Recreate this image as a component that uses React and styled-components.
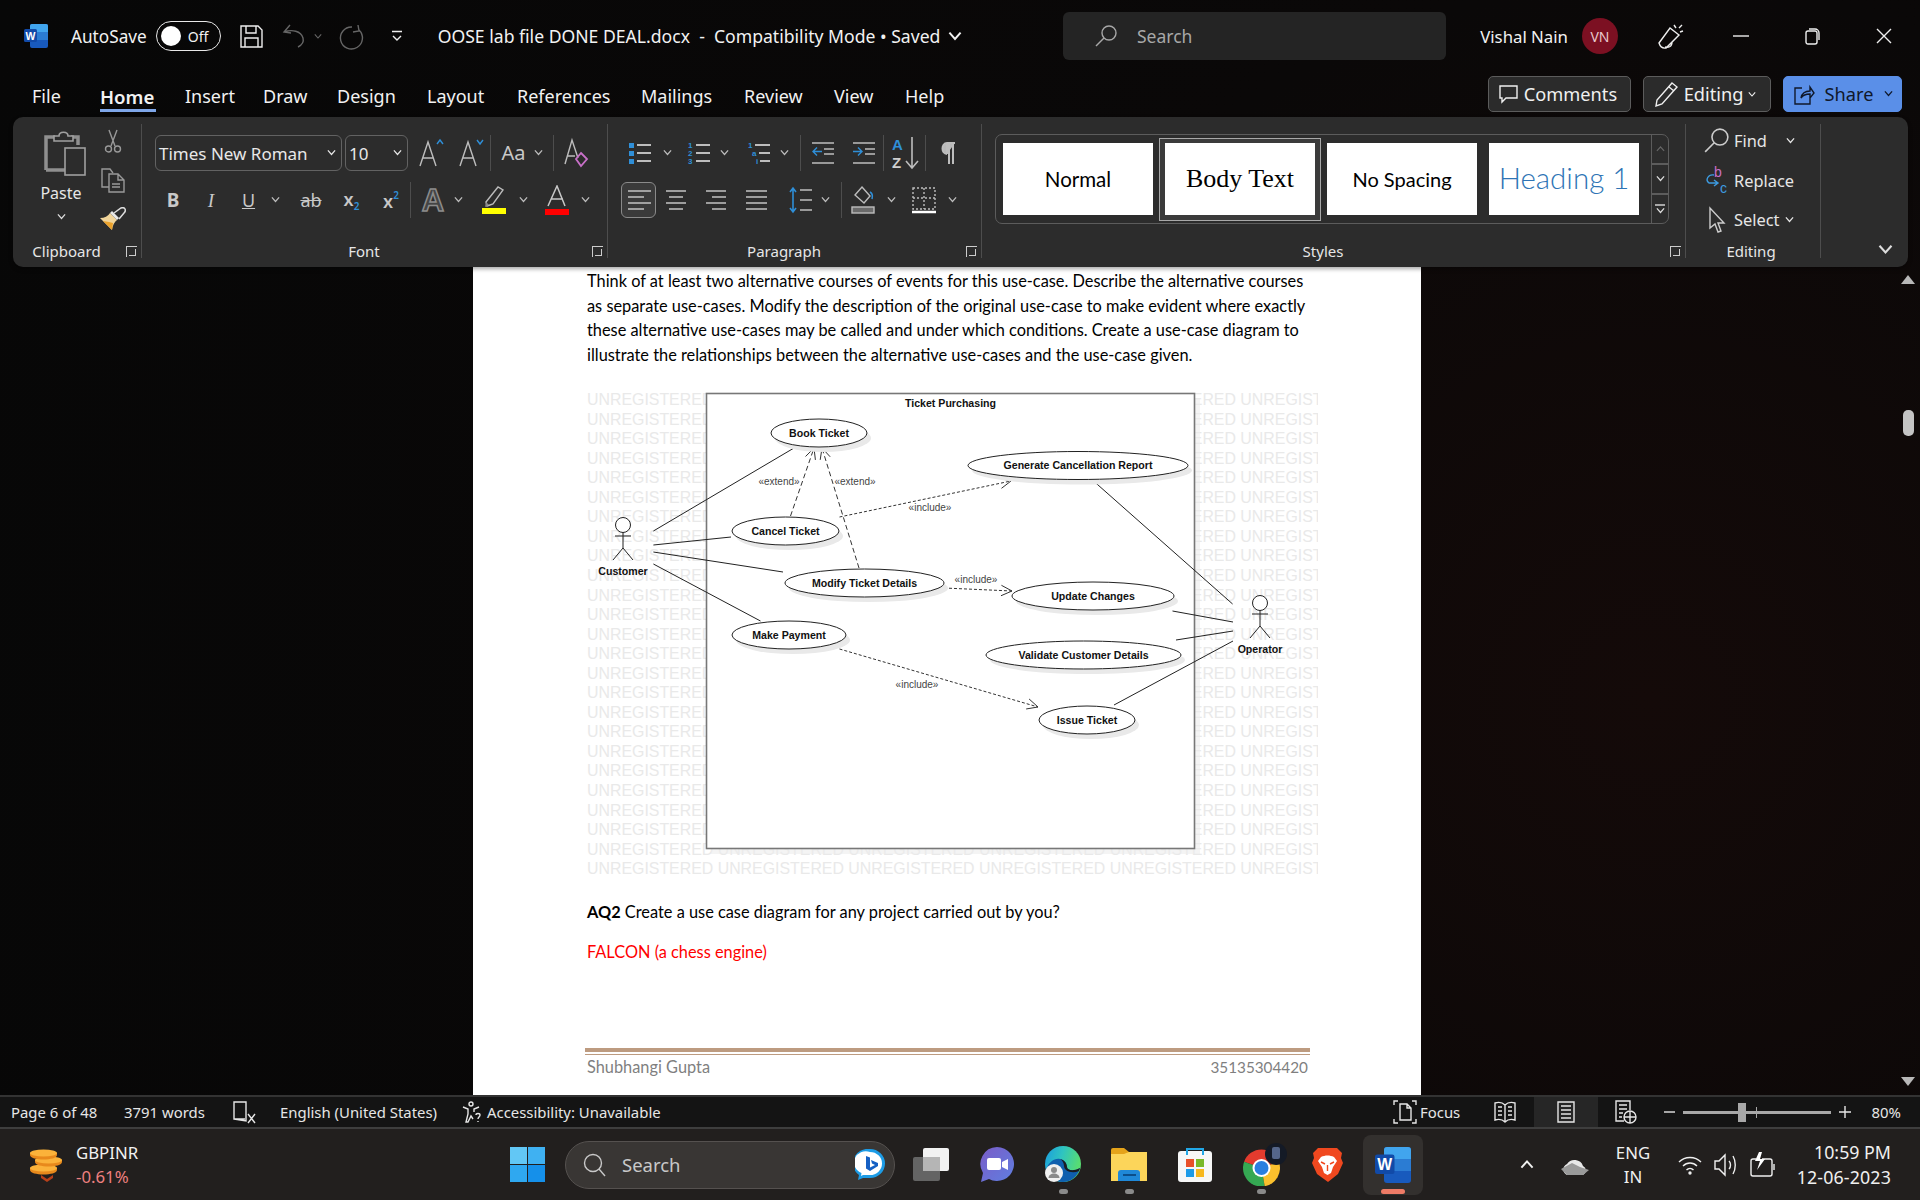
import React from 'react';
import styled, { createGlobalStyle } from 'styled-components';

const UI = `"Noto Sans", "Open Sans", sans-serif`;

const Global = createGlobalStyle`
  html, body { margin: 0; padding: 0; background: #080808; }
  * { box-sizing: border-box; }
  svg { display: block; flex: none; }
`;

const Shell = styled.div`
  width: 1920px;
  height: 1200px;
  overflow: hidden;
  display: flex;
  flex-direction: column;
  font-family: ${UI};
  color: #f2f2f2;
  background: radial-gradient(circle at 1650px 700px, #140a09 0, #0a0808 40%, #070707 100%);
`;

const Ic = styled.svg`
  fill: none;
  stroke: currentColor;
  stroke-width: 1.4;
  overflow: visible;
`;

const Chev = ({ w = 9, up }) => (
  <Ic width={w} height={w * 0.6} viewBox="0 0 10 6" strokeWidth="1.4">
    <path d={up ? 'M1 5.5 5 1l4 4.5' : 'M1 .5 5 5l4-4.5'} />
  </Ic>
);

/* title bar */
const TitleBar = styled.div`
  height: 62px;
  flex: none;
  display: flex;
  align-items: center;
  padding: 10px 0 0 24px;
`;
const TitleLeft = styled.div`
  width: 1039px;
  flex: none;
  display: flex;
  align-items: center;
`;
const AutoSave = styled.span`
  font-size: 17.2px;
  margin-left: 23px;
`;
const Toggle = styled.div`
  width: 65px;
  height: 30px;
  margin: 0 19px 0 9px;
  border: 1.5px solid #e8e8e8;
  border-radius: 15px;
  display: flex;
  align-items: center;
  padding-left: 4px;
  gap: 7px;
  font-size: 14px;
`;
const Knob = styled.div`
  width: 20px;
  height: 20px;
  border-radius: 50%;
  background: #fff;
`;
const QuickIcon = styled.div`
  width: ${p => p.$w}px;
  flex: none;
  display: flex;
  align-items: center;
  gap: 9px;
  color: ${p => (p.$dim ? '#666' : '#eee')};
`;
const DocName = styled.span`
  font-size: 17.6px;
  white-space: pre;
  margin-right: 8px;
`;
const SearchBox = styled.div`
  width: 383px;
  height: 48px;
  flex: none;
  align-self: flex-start;
  margin-top: 2px;
  background: #242424;
  border-radius: 6px;
  display: flex;
  align-items: center;
  padding-left: 32px;
  gap: 20px;
  font-size: 17.5px;
  color: #a8a8a8;
`;
const Account = styled.div`
  margin-left: auto;
  margin-right: 16px;
  display: flex;
  align-items: center;
  font-size: 16.8px;
`;
const Avatar = styled.div`
  width: 36px;
  height: 36px;
  border-radius: 50%;
  margin-left: 14px;
  background: #7c1022;
  color: #e8c8cc;
  font-size: 14px;
  display: flex;
  align-items: center;
  justify-content: center;
`;
const WinBtn = styled.div`
  width: ${p => p.$w}px;
  flex: none;
  display: flex;
  justify-content: center;
  color: #eee;
`;

/* tabs */
const TabRow = styled.div`
  height: 55px;
  flex: none;
  display: flex;
  align-items: center;
  padding: 13px 18px 0 32px;
`;
const Tab = styled.div`
  position: relative;
  font-size: ${p => (p.$active ? 18.6 : 18)}px;
  font-weight: ${p => (p.$active ? 600 : 400)};
  width: ${p => p.$w}px;
  white-space: nowrap;
  ${p => p.$active && `
    &::after {
      content: '';
      position: absolute;
      left: 0;
      top: 25px;
      width: 56px;
      height: 3px;
      background: #7ea6e8;
    }
  `}
`;
const TabActions = styled.div`
  margin-left: auto;
  display: flex;
  gap: 12px;
  margin-top: -4px;
`;
const ActionBtn = styled.div`
  width: ${p => p.$w}px;
  height: 36px;
  border-radius: 5px;
  border: 1px solid ${p => (p.$primary ? '#5a8fe8' : '#5c5c5c')};
  background: ${p => (p.$primary ? '#5a8fe8' : '#2b2b2b')};
  color: ${p => (p.$primary ? '#10182a' : '#f0f0f0')};
  display: flex;
  align-items: center;
  justify-content: ${p => (p.$primary ? 'space-between' : 'center')};
  padding: ${p => (p.$primary ? '0 8px 0 10px' : '0 3px 0 0')};
  gap: 5px;
  font-size: 18.2px;
`;

/* ribbon */
const Ribbon = styled.div`
  height: 150px;
  flex: none;
  margin: 0 12px 0 13px;
  background: #2c2c2c;
  border-radius: 10px;
  display: flex;
  padding: 7px 0 4px;
  position: relative;
  z-index: 2;
  box-shadow: 0 2px 4px rgba(0, 0, 0, 0.35);
  font-size: 15px;
`;
const Group = styled.div`
  width: ${p => p.$w}px;
  flex: none;
  display: flex;
  flex-direction: column;
  margin-bottom: 5px;
  border-right: ${p => (p.$last ? 'none' : '1px solid #4d4d4d')};
  padding-left: ${p => p.$pad || 0}px;
`;
const GroupBody = styled.div`
  flex: 1;
  display: flex;
  flex-direction: column;
  min-height: 0;
`;
const GroupFooter = styled.div`
  height: 22px;
  margin-bottom: -4px;
  display: grid;
  grid-template-columns: 1fr auto 1fr;
  align-items: center;
  color: #e6e6e6;
  font-size: 15px;
  margin-left: ${p => -(p.$pad || 0)}px;
  padding-right: 4px;
`;
const GroupLabel = styled.span`
  margin-right: ${p => p.$shift ?? 17}px;
`;
const Launcher = styled.div`
  justify-self: end;
  width: 11px;
  height: 11px;
  border-left: 1px solid #ccc;
  border-top: 1px solid #ccc;
  position: relative;
  &::after {
    content: '';
    position: absolute;
    left: 2px;
    top: 2px;
    width: 6px;
    height: 6px;
    border-right: 1px solid #ccc;
    border-bottom: 1px solid #ccc;
  }
`;
const Row = styled.div`
  display: flex;
  align-items: center;
  height: 46px;
  margin-top: ${p => p.$top || 0}px;
`;
const Tool = styled.div`
  width: ${p => p.$w}px;
  height: 36px;
  flex: none;
  display: flex;
  align-items: center;
  justify-content: center;
  gap: ${p => p.$gap ?? 8}px;
  color: #bdbdbd;
  ${p => p.$sep && 'border-right: 1px solid #4d4d4d;'}
  ${p => p.$on && `
    border: 1px solid #8a8a8a;
    border-radius: 6px;
    background: #3a3a3a;
  `}
`;
const Select = styled.div`
  width: ${p => p.$w}px;
  height: 36px;
  flex: none;
  margin-right: 3px;
  border: 1px solid #626262;
  border-radius: 6px;
  display: flex;
  align-items: center;
  justify-content: space-between;
  padding: 0 5px 0 3px;
  font-size: 17px;
  color: #e8e8e8;
`;
const Clipboard = styled.div`
  display: flex;
`;
const PasteCol = styled.div`
  width: 96px;
  display: flex;
  flex-direction: column;
  align-items: center;
  padding-top: 6px;
`;
const PasteIconWrap = styled.div`
  margin-left: 7px;
`;
const PasteLabel = styled.div`
  font-size: 16px;
  color: #e6e6e6;
  margin-top: 6px;
`;
const PasteChev = styled.div`
  margin-top: 10px;
  color: #ddd;
`;
const ClipTools = styled.div`
  display: flex;
  flex-direction: column;
  align-items: center;
  width: 40px;
  margin-left: -16px;
  padding-top: 5px;
  gap: 15px;
  color: #999;
`;
const Gallery = styled.div`
  margin: 10px 0 0 13px;
  width: 674px;
  height: 90px;
  border: 1px solid #5c5c5c;
  border-radius: 7px;
  display: flex;
  align-items: center;
  padding-left: 7px;
`;
const StyleCell = styled.div`
  width: ${p => (p.$sel ? 162 : 150)}px;
  height: ${p => (p.$sel ? 83 : 72)}px;
  margin-right: ${p => (p.$sel ? 6 : 12)}px;
  margin-left: ${p => (p.$sel ? -6 : 0)}px;
  flex: none;
  display: flex;
  align-items: center;
  justify-content: center;
  ${p => p.$sel && 'border: 1px solid #a8a8a8; background: #3b3b3b;'}
`;
const Swatch = styled.div`
  width: 150px;
  height: 72px;
  background: #fff;
  color: ${p => p.$color || '#000'};
  font-family: ${p => p.$font || '"Lato", sans-serif'};
  font-size: ${p => p.$size}px;
  font-weight: ${p => p.$weight || 400};
  padding-bottom: ${p => p.$lift || 0}px;
  display: flex;
  align-items: center;
  justify-content: center;
`;
const GalleryScroll = styled.div`
  margin-left: auto;
  width: 22px;
  height: 100%;
  display: flex;
  flex-direction: column;
  border-left: 1px solid #5c5c5c;
`;
const ScrollCell = styled.div`
  flex: 1;
  display: flex;
  flex-direction: column;
  gap: 2px;
  align-items: center;
  justify-content: center;
  color: ${p => (p.$dim ? '#666' : '#ddd')};
  & + & { border-top: 2px solid #5c5c5c; }
`;
const EditList = styled.div`
  margin-top: -3px;
`;
const EditRow = styled.div`
  display: flex;
  align-items: center;
  height: 39.5px;
  font-size: 16.4px;
  color: #e6e6e6;
  gap: 5px;
`;
const EditIcon = styled.div`
  width: 25px;
  display: flex;
  justify-content: center;
  color: #ccc;
`;
const EditChev = styled.div`
  margin-left: ${p => p.$m}px;
`;
const Collapse = styled.div`
  margin: auto 0 4px 57px;
  color: #ddd;
`;

/* document */
const DocArea = styled.div`
  flex: 1;
  min-height: 0;
  display: flex;
  padding-left: 473px;
`;
const Page = styled.div`
  width: 948px;
  background: #fff;
  color: #000;
  padding: 2px 0 0 114px;
  font-family: "Lato", "Carlito", sans-serif;
  font-size: 16.35px;
  overflow: hidden;
`;
const Para = styled.p`
  margin: 0;
  line-height: 24.6px;
  white-space: pre;
`;
const Figure = styled.svg`
  margin: 21.6px 0 20px;
`;
const Line = styled.div`
  line-height: 24.6px;
  color: ${p => p.$color || '#000'};
  margin-bottom: 15.4px;
`;
const Bold = styled.b`
  font-weight: 700;
`;
const Footer = styled.div`
  margin: 83.7px 0 0 -2px;
  width: 725px;
`;
const FooterRule = styled.div`
  height: 6.5px;
  border-top: 4px solid #bd9b80;
  border-bottom: 1px solid #bd9b80;
`;
const FooterText = styled.div`
  display: flex;
  justify-content: space-between;
  align-items: baseline;
  padding: 2px 2px 0;
  color: #7f7f7f;
`;
const FooterNum = styled.span`
  font-size: 15.3px;
`;
const Scrollbar = styled.div`
  margin-left: auto;
  width: 24px;
  display: flex;
  flex-direction: column;
  align-items: center;
  padding: 8px 0 9px;
`;
const Arrow = styled.div`
  width: 0;
  height: 0;
  border-left: 7px solid transparent;
  border-right: 7px solid transparent;
  ${p => (p.$down ? 'border-top: 9px solid #b8b8b8; margin-top: auto;' : 'border-bottom: 9px solid #b8b8b8;')}
`;
const Thumb = styled.div`
  width: 11px;
  height: 26px;
  margin-top: 126px;
  border-radius: 5px;
  background: #c4c4c4;
`;

/* status bar */
const StatusBar = styled.div`
  height: 34px;
  flex: none;
  background: #141414;
  border-top: 2px solid #333;
  border-bottom: 2px solid #3e3e3e;
  display: flex;
  align-items: center;
  padding-left: 11px;
  font-size: 14.9px;
  color: #e6e6e6;
`;
const StatusItem = styled.div`
  display: flex;
  align-items: center;
  gap: ${p => p.$gap || 0}px;
  width: ${p => p.$w}px;
  flex: none;
  justify-content: ${p => (p.$center ? 'center' : p.$end ? 'flex-end' : 'flex-start')};
  margin-right: ${p => p.$mr || 0}px;
  ${p => p.$on && 'background: #262626; align-self: stretch;'}
`;
const StatusRight = styled.div`
  margin-left: auto;
  display: flex;
  align-items: center;
  align-self: stretch;
  padding-right: 19px;
`;
const Zoom = styled.div`
  width: 148px;
  height: 3px;
  margin: 0 8px;
  background: #a8a8a8;
  position: relative;
`;
const ZoomThumb = styled.div`
  position: absolute;
  left: 55px;
  top: -8px;
  width: 8px;
  height: 19px;
  background: #a8a8a8;
`;
const ZoomTick = styled.div`
  position: absolute;
  left: 73px;
  top: -4px;
  width: 1px;
  height: 11px;
  background: #a8a8a8;
`;

/* taskbar */
const TaskBar = styled.div`
  height: 71px;
  flex: none;
  background: #221f1e;
  display: flex;
  align-items: center;
  padding-left: 30px;
`;
const Widget = styled.div`
  width: 480px;
  display: flex;
  align-items: center;
  gap: 12px;
`;
const WidgetText = styled.div`
  font-size: 16.8px;
  line-height: 24px;
`;
const Loss = styled.div`
  color: #ee8080;
`;
const TaskSearch = styled.div`
  width: 330px;
  height: 48px;
  margin-left: 20px;
  margin-right: 3px;
  background: #393634;
  border: 1px solid #55514f;
  border-radius: 24px;
  display: flex;
  align-items: center;
  padding: 0 9px 0 17px;
  gap: 16px;
  font-size: 18.5px;
  color: #c8c8c8;
`;
const BingWrap = styled.div`
  margin-left: auto;
`;
const Slot = styled.div`
  width: 66px;
  height: 60px;
  flex: none;
  position: relative;
  display: flex;
  align-items: center;
  justify-content: center;
  ${p => p.$active && `
    background: #33302e;
    border-radius: 8px;
    margin: 0 3px;
    width: 60px;
  `}
`;
const Dot = styled.div`
  position: absolute;
  left: 50%;
  bottom: 1px;
  margin-left: ${p => (p.$active ? -12 : -4.5)}px;
  width: ${p => (p.$active ? 24 : 9)}px;
  height: 5px;
  border-radius: 3px;
  background: ${p => (p.$active ? '#ee7b66' : '#8a8a8a')};
`;
const Tray = styled.div`
  margin-left: 89px;
  flex: 1;
  display: flex;
  align-items: center;
  padding-right: 29px;
  color: #f0f0f0;
`;
const TrayItem = styled.div`
  width: ${p => p.$w}px;
  display: flex;
  justify-content: center;
  flex: none;
`;
const Lang = styled.div`
  width: 60px;
  margin: 1px 8px 0 -8px;
  font-size: 16.8px;
  line-height: 24px;
  text-align: center;
`;
const Clock = styled.div`
  margin-left: auto;
  text-align: right;
  font-size: 17.8px;
  line-height: 25px;
`;
const ClockDate = styled.div`
  letter-spacing: 0.15px;
`;

/* icons */
const WordMark = ({ s = 24 }) => (
  <svg width={s} height={s} viewBox="0 0 24 24">
    <rect x="6" y="0" width="18" height="24" rx="2" fill="#185abd" />
    <path d="M8 0h14a2 2 0 0 1 2 2v6H6V2a2 2 0 0 1 2-2z" fill="#41a5ee" />
    <rect x="6" y="8" width="18" height="8" fill="#2b7cd3" />
    <rect x="0" y="5" width="13" height="13" rx="1.5" fill="#114aa8" />
    <text x="6.5" y="15.500" textAnchor="middle" fontSize="10.500" fontWeight="700" fill="#fff" fontFamily="Liberation Sans, sans-serif">W</text>
  </svg>
);
const SaveIcon = () => (
  <Ic width="23" height="23" viewBox="0 0 23 23" strokeWidth="1.6">
    <path d="M1 1h17l4 4v17H1zM6 1v7h10V1M5 22v-9h13v9" />
  </Ic>
);
const UndoIcon = () => (
  <Ic width="22" height="24" viewBox="0 0 22 24" strokeWidth="1.5">
    <path d="M7 1 1 8l7 1M1 8c8-3 17-1 19 6 1 4-1 7-5 9" />
  </Ic>
);
const RedoIcon = () => (
  <Ic width="26" height="24" viewBox="0 0 26 24" strokeWidth="1.5">
    <path d="M16 1l1 6-6 1M17 6a11 11 0 1 1-7-3" />
  </Ic>
);
const CustomizeIcon = () => (
  <Ic width="12" height="12" viewBox="0 0 12 12" strokeWidth="1.6">
    <path d="M1 1.500h10M2 6l4 4 4-4" />
  </Ic>
);
const SearchIcon = ({ s = 22 }) => (
  <Ic width={s} height={s} viewBox="0 0 22 22" strokeWidth="1.4">
    <circle cx="14" cy="8" r="7" />
    <path d="M9 13 1 21" />
  </Ic>
);
const Brush = () => (
  <Ic width="25" height="25" viewBox="0 0 25 25" strokeWidth="1.7">
    <path d="M1 19 12 4l9 7L8 24q-5 1-7-5zM7 23c3 1 7 0 7-5" />
    <path d="M16 1l2 3M24 1l-3 3M25 7l-3 1" />
  </Ic>
);

const ClipboardIcon = () => (
  <svg width="42" height="46" viewBox="0 0 42 46" fill="none">
    <path d="M2 40V7h9M27 7h7v8M2 40h19" stroke="#8f8f8f" strokeWidth="3.500" />
    <path d="M10 11V6h5c0-5 9-5 9 0h5v5z" stroke="#a0a0a0" strokeWidth="1.600" fill="#2c2c2c" />
    <rect x="21" y="18" width="20" height="27" fill="#2c2c2c" stroke="#a0a0a0" strokeWidth="1.600" />
  </svg>
);
const ScissorsIcon = () => (
  <Ic width="16" height="24" viewBox="0 0 16 24" strokeWidth="1.300">
    <path d="M4 1l6 16M12 1 6 17" />
    <circle cx="3.500" cy="20" r="3" />
    <circle cx="12.500" cy="20" r="3" />
  </Ic>
);
const CopyIcon = () => (
  <Ic width="24" height="24" viewBox="0 0 24 24" strokeWidth="1.400">
    <path d="M8 19H1V1h8l3 4" />
    <path d="M8 6h9l6 6v12H8zM17 6v6h6M11 16h8M11 19h8" />
  </Ic>
);
const PainterIcon = () => (
  <svg width="26" height="23" viewBox="0 0 26 23">
    <path d="M0 11q7 0 10-5l7 7q-4 3-5 10z" fill="#f0d49a" />
    <path d="M3 14l6 1 4 1-1 7z" fill="#eba22c" />
    <path d="M10 6l7 7 2-2-7-7z" fill="#e8e8e8" />
    <path d="M14 6l7-5q3-1 4 1 1 2-1 4l-5 6" fill="none" stroke="#ddd" strokeWidth="1.500" />
  </svg>
);

const BLUE = '#2f8fd8';
const Lines = ({ x = 8, ys, w = 14 }) => ys.map(y => <path key={y} d={`M${x} ${y}h${w}`} stroke="#bdbdbd" strokeWidth="2" />);
const BulletIcon = () => (
  <Ic width="22" height="22" viewBox="0 0 22 22">
    <rect x="0" y="1" width="5" height="5" fill={BLUE} stroke="none" />
    <rect x="0" y="9" width="5" height="5" fill={BLUE} stroke="none" />
    <rect x="0" y="17" width="5" height="5" fill={BLUE} stroke="none" />
    <Lines x={8} ys={[3, 11, 19]} />
  </Ic>
);
const Tiny = styled.text`
  font-family: "Liberation Sans", sans-serif;
  font-size: ${p => p.$s || 8}px;
  fill: ${p => p.$fill || BLUE};
  stroke: none;
  font-weight: 700;
`;
const NumberIcon = () => (
  <Ic width="22" height="24" viewBox="0 0 22 24">
    <Tiny x="0" y="7">1</Tiny><Tiny x="0" y="15">2</Tiny><Tiny x="0" y="23">3</Tiny>
    <Lines x={8} ys={[4, 12, 20]} />
  </Ic>
);
const MultiIcon = () => (
  <Ic width="22" height="24" viewBox="0 0 22 24">
    <Tiny x="0" y="7">1</Tiny><Tiny x="4" y="15">a</Tiny><Tiny x="8" y="23">i</Tiny>
    <path d="M7 4h15M11 12h11M12 20h10" stroke="#bdbdbd" strokeWidth="2" />
  </Ic>
);
const IndentIcon = ({ out }) => (
  <Ic width="24" height="24" viewBox="0 0 24 24" strokeWidth="2">
    <path d="M1 2h22M13 8h10M13 13h10M1 22h22" />
    <path d={out ? 'M11 10.500H2M6 6.500l-4 4 4 4' : 'M1 10.500h9M6 6.500l4 4-4 4'} stroke={BLUE} />
  </Ic>
);
const SortIcon = () => (
  <Ic width="26" height="34" viewBox="0 0 26 34">
    <Tiny x="0" y="14" $s={15}>A</Tiny>
    <Tiny x="0" y="32" $s={15} $fill="#cfcfcf">Z</Tiny>
    <path d="M20 1v31M14 25l6 7 6-7" strokeWidth="1.600" />
  </Ic>
);
const Pilcrow = () => (
  <Ic width="16" height="22" viewBox="0 0 16 22">
    <path d="M7 12C1 12 1 1 7 1h8M9 1v21M13 1v21M7 1v11" fill="#b8b8b8" strokeWidth="2" />
  </Ic>
);
const AlignIcon = ({ mode }) => {
  const rows = mode === 'left' ? [[1, 23], [1, 16], [1, 23], [1, 16]]
    : mode === 'center' ? [[1, 20], [4, 14], [1, 20], [4, 14]]
      : mode === 'right' ? [[1, 20], [7, 14], [1, 20], [7, 14]]
        : [[1, 21], [1, 21], [1, 21], [1, 21]];
  return (
    <Ic width="24" height="22" viewBox="0 0 24 22" strokeWidth="2" color="#cfcfcf">
      {rows.map(([x, w], i) => <path key={i} d={`M${x} ${2 + i * 6}h${w}`} />)}
    </Ic>
  );
};
const SpacingIcon = () => (
  <Ic width="24" height="26" viewBox="0 0 24 26" strokeWidth="2">
    <path d="M4 1v24M1 5l3-4 3 4M1 21l3 4 3-4" stroke={BLUE} strokeWidth="1.600" />
    <path d="M11 3h12M11 13h12M11 23h12" />
  </Ic>
);
const ShadeIcon = () => (
  <Ic width="24" height="28" viewBox="0 0 24 28" strokeWidth="1.400">
    <path d="M11 1l8 9-6 7-9-8z" />
    <path d="M19 6c2 1 3 3 2 7" stroke={BLUE} strokeWidth="1.600" />
    <rect x="1" y="21" width="22" height="6" fill="#6a6a6a" />
  </Ic>
);
const BorderIcon = () => (
  <Ic width="24" height="26" viewBox="0 0 24 26" strokeDasharray="2 2">
    <rect x="1" y="1" width="22" height="21" />
    <path d="M12 1v21M1 11h22" />
    <path d="M0 25h24" strokeDasharray="none" strokeWidth="2.500" stroke="#fff" />
  </Ic>
);
const BigA = styled.span`
  font-size: ${p => p.$s}px;
  line-height: 1;
  color: ${p => p.$c || '#c8c8c8'};
  font-weight: ${p => p.$w || 400};
  font-family: ${p => p.$f || UI};
  ${p => p.$italic && 'font-style: italic;'}
  ${p => p.$under && 'text-decoration: underline;'}
  ${p => p.$strike && 'text-decoration: line-through;'}
`;
const Scr = styled.sub`
  font-size: 10px;
  color: ${BLUE};
  vertical-align: ${p => (p.$up ? '9px' : '-4px')};
`;
const GrowA = ({ up }) => (
  <Ic width="26" height="28" viewBox="0 0 26 28" strokeWidth="1.500">
    <path d="M1 27 9 3l8 24M4 19h10" />
    <path d={up ? 'M18 5l3-4 3 4' : 'M18 1l3 4 3-4'} stroke={BLUE} />
  </Ic>
);
const ClearA = () => (
  <Ic width="24" height="30" viewBox="0 0 24 30" strokeWidth="1.400">
    <path d="M1 26 8 2l6 18M3 18h8" />
    <path d="M17 15l6 6-6 7-5-7z" stroke="#c870c8" strokeWidth="1.800" />
  </Ic>
);
const EffectA = () => (
  <svg width="26" height="30" viewBox="0 0 26 30">
    <text x="13" y="26" textAnchor="middle" fontSize="31" fontWeight="700" fontFamily="Liberation Sans, sans-serif" fill="#444" stroke="#8c8c8c" strokeWidth="1.500">A</text>
  </svg>
);
const HighlightIcon = () => (
  <svg width="26" height="30" viewBox="0 0 26 30">
    <path d="M5 17 17 2l5 3-10 14-6 2z" fill="none" stroke="#bbb" strokeWidth="1.400" />
    <path d="M5 17l3 3-4 2z" fill="#888" />
    <rect x="1" y="23" width="24" height="6" fill="#ffff00" />
  </svg>
);
const ColorA = () => (
  <svg width="24" height="30" viewBox="0 0 24 30">
    <path d="M3 21 12 1l8 20M6 14h12" fill="none" stroke="#c8c8c8" strokeWidth="1.500" />
    <rect x="0" y="24" width="24" height="6" fill="#ff0000" />
  </svg>
);
const ReplaceIcon = () => (
  <svg width="25" height="30" viewBox="0 0 25 30" fill="none">
    <text x="10" y="12" fontSize="14" fill="#c870c8" fontFamily="Liberation Sans, sans-serif">b</text>
    <text x="16" y="28" fontSize="14" fill="#3d9be0" fontFamily="Liberation Sans, sans-serif">c</text>
    <path d="M10 10c-6-1-9 5-5 8h8M10 15l4 3-4 3" stroke="#3d9be0" strokeWidth="1.400" />
  </svg>
);
const CursorIcon = () => (
  <Ic width="18" height="26" viewBox="0 0 18 26" strokeWidth="1.400">
    <path d="M2 1v20l5-4 3 8 3-1-3-8h6z" />
  </Ic>
);

const ProofIcon = () => (
  <Ic width="23" height="23" viewBox="0 0 23 23" strokeWidth="1.400">
    <path d="M12 18H1V1h12v1M13 1v10M1 18l12 2V11M15 13l7 9M22 13l-7 9" />
  </Ic>
);
const AccessIcon = () => (
  <Ic width="20" height="22" viewBox="0 0 20 22" strokeWidth="1.300">
    <circle cx="9" cy="3" r="2" />
    <path d="M1 6l5 2v5l-2 8h2l3-6 2 3M17 6l-5 2v3M14 14c0-2 4-2 4 0s-2 2-2 4M16 20v1" />
  </Ic>
);
const FocusIcon = () => (
  <Ic width="24" height="24" viewBox="0 0 24 24" strokeWidth="1.500">
    <path d="M1 5V1h4M19 1h4v4M23 19v4h-4M5 23H1v-4M7 4h7l4 4v12H7zM14 4v4h4" />
  </Ic>
);
const ReadIcon = () => (
  <Ic width="22" height="22" viewBox="0 0 22 22" strokeWidth="1.400">
    <path d="M11 4C8 1 4 1 1 2v17c3-1 7-1 10 2 3-3 7-3 10-2V2c-3-1-7-1-10 2zM11 4v17M4 6h4M4 10h4M4 14h4M14 6h4M14 10h4M14 14h4" />
  </Ic>
);
const PrintIcon = () => (
  <Ic width="18" height="22" viewBox="0 0 18 22" strokeWidth="1.500">
    <path d="M1 1h16v20H1zM4 5h10M4 9h10M4 13h10M4 17h10" />
  </Ic>
);
const WebIcon = () => (
  <Ic width="22" height="24" viewBox="0 0 22 24" strokeWidth="1.300">
    <path d="M9 21H1V1h14v9M4 5h8M4 9h8M4 13h4M4 17h3" />
    <circle cx="15" cy="17" r="6" />
    <path d="M9 17h12M15 11v12" />
  </Ic>
);

const Coins = () => (
  <svg width="34" height="34" viewBox="0 0 34 34">
    {[[14, 17], [19, 9], [14, 2]].map(([x, y]) => (
      <g key={y}>
        <path d={`M${x - 14} ${y + 3}v2c0 6 27 6 27 0v-2z`} fill="#e8891c" />
        <ellipse cx={x - 0.5} cy={y + 3} rx="13.500" ry="3.500" fill="#fbb23a" />
      </g>
    ))}
    <path d="M11 27l6 4 6-4v3l-6 4-6-4z" fill="#b8401a" />
  </svg>
);
const WinLogo = () => (
  <svg width="35" height="35" viewBox="0 0 35 35">
    <rect width="17" height="17" fill="#62c7f5" />
    <rect x="18" width="17" height="17" fill="#3fb1f2" />
    <rect y="18" width="17" height="17" fill="#2fa8f0" />
    <rect x="18" y="18" width="17" height="17" fill="#1590ea" />
  </svg>
);
const BingIcon = () => (
  <svg width="30" height="31" viewBox="0 0 30 31">
    <path d="M15 0a15 14.500 0 0 1 0 29H8l-5 2 1-5A15 14.500 0 0 1 15 0z" fill="#1d9ce6" />
    <path d="M15 3a11.500 11 0 0 1 0 23H8l-2 1 .5-3A11.500 11 0 0 1 15 3z" fill="#fff" />
    <path d="M11 7l4 1.500v10l5-2.500-3-1.500-1-3.500 7 3v3l-8 5-4-2.500z" fill="#1560c4" />
  </svg>
);
const TaskView = () => (
  <svg width="36" height="33" viewBox="0 0 36 33">
    <rect x="10" y="0" width="26" height="23" rx="2" fill="#f2f2f2" />
    <rect x="0" y="9" width="27" height="24" rx="2" fill="#646464" />
    <path d="M10 9h17v14H10z" fill="#b5b5b5" />
  </svg>
);
const TeamsIcon = () => (
  <svg width="34" height="35" viewBox="0 0 34 35">
    <defs>
      <linearGradient id="tm" x1="0" y1="0" x2="1" y2="1">
        <stop offset="0" stopColor="#7a5cc8" />
        <stop offset="1" stopColor="#5f7fe0" />
      </linearGradient>
    </defs>
    <path d="M17 0a17 17 0 1 1-8 32l-8 3 2-9A17 17 0 0 1 17 0z" fill="url(#tm)" />
    <rect x="7" y="11" width="14" height="12" rx="2" fill="#fff" />
    <path d="M22 15l6-3v11l-6-3z" fill="#fff" />
  </svg>
);
const EdgeIcon = () => (
  <svg width="36" height="37" viewBox="0 0 36 37">
    <defs>
      <linearGradient id="ed" x1="0" y1="0" x2="1" y2="0.300">
        <stop offset="0" stopColor="#1a9ce0" />
        <stop offset="0.500" stopColor="#2fc4c0" />
        <stop offset="1" stopColor="#58dc72" />
      </linearGradient>
    </defs>
    <circle cx="18" cy="18" r="18" fill="url(#ed)" />
    <path d="M1 24C4 15 10 12 15 13c5 1 7 5 7 8 0 3 6 5 13 1-2 8-9 14-17 14C10 36 3 31 1 24z" fill="#0f5fae" />
    <path d="M15 13c5 1 7 5 7 8 0 3 6 5 13 1 0 1-1 2-1 3-7 3-15 0-15-5 0-3-2-6-4-7z" fill="#1a1d22" />
    <circle cx="9" cy="27" r="9" fill="#f0f0f0" />
    <circle cx="9" cy="24" r="3" fill="#8a8a8a" />
    <path d="M3.500 32c0-6 11-6 11 0z" fill="#8a8a8a" />
  </svg>
);
const FolderIcon = () => (
  <svg width="36" height="33" viewBox="0 0 36 33">
    <path d="M0 2q0-2 2-2h11l5 4h18v29H0z" fill="#e5a31a" />
    <path d="M0 6h13l5-2h18v29H0z" fill="#fcd55a" />
    <path d="M7 33V25q0-3 3-3h16q3 0 3 3v8z" fill="#1f88d8" />
    <rect x="12" y="26" width="13" height="2" fill="#0c4e8a" />
  </svg>
);
const StoreIcon = () => (
  <svg width="34" height="35" viewBox="0 0 34 35">
    <rect y="4" width="34" height="31" rx="3" fill="#f7f7f7" />
    <path d="M9 8V2h16v6" fill="none" stroke="#22a7e6" strokeWidth="2" />
    <rect x="8" y="12" width="8" height="8" fill="#e8502a" />
    <rect x="18" y="12" width="8" height="8" fill="#7ab929" />
    <rect x="8" y="22" width="8" height="8" fill="#1e9be8" />
    <rect x="18" y="22" width="8" height="8" fill="#f7b81e" />
  </svg>
);
const pie = (cx, cy, r, a, b) => {
  const pt = t => `${cx + r * Math.cos((t * Math.PI) / 180)} ${cy + r * Math.sin((t * Math.PI) / 180)}`;
  return `M${cx} ${cy}L${pt(a)}A${r} ${r} 0 0 1 ${pt(b)}Z`;
};
const ChromeIcon = () => (
  <svg width="52" height="43" viewBox="0 0 52 43">
    <path d={pie(26.5, 25, 18.5, 200, 340)} fill="#e33b2e" />
    <path d={pie(26.5, 25, 18.5, 80, 200)} fill="#35a853" />
    <path d={pie(26.5, 25, 18.5, 340, 440)} fill="#fbc02d" />
    <circle cx="26.500" cy="25" r="9" fill="#fff" />
    <circle cx="26.500" cy="25" r="7" fill="#2a7fe0" />
    <circle cx="41" cy="11" r="11" fill="#141a26" />
    <rect x="37" y="4" width="8" height="12" rx="2" fill="#55668a" />
  </svg>
);
const BraveIcon = () => (
  <svg width="31" height="34" viewBox="0 0 31 34">
    <path d="M6 0h19l5 5-1 5 2 5-5 11-10 8L5 26 0 15l2-5-1-5z" fill="#f0481f" />
    <path d="M9 9c4-2 9-2 13 0l3 4-4 6-2 6-3.500 2-3.500-2-2-6-4-6z" fill="#fff" />
    <path d="M9 14l4 2M22 14l-4 2M15.500 17v6" stroke="#f0481f" strokeWidth="1.400" fill="none" />
  </svg>
);
const CloudIcon = () => (
  <svg width="30" height="24" viewBox="0 0 30 24">
    <path d="M7 22a6 6 0 0 1 0-11 9 9 0 0 1 16 2 5 5 0 0 1 0 9z" fill="#e8e8e8" />
    <path d="M1 16l11-6 8 4 9 3-6 5H7z" fill="#9a9a9a" />
  </svg>
);
const WifiIcon = () => (
  <Ic width="24" height="20" viewBox="0 0 24 20" strokeWidth="1.800">
    <path d="M1 7c6-6 16-6 22 0M5 11c4-4 10-4 14 0M8.500 15c2-2 5-2 7 0" />
    <circle cx="12" cy="18" r="1" fill="currentColor" />
  </Ic>
);
const SpeakerIcon = () => (
  <Ic width="24" height="24" viewBox="0 0 24 24" strokeWidth="1.500">
    <path d="M2 8h4l6-6v20l-6-6H2zM16 8c2 2 2 6 0 8M20 3c3 5 3 13 0 18" />
  </Ic>
);
const BatteryIcon = () => (
  <Ic width="26" height="26" viewBox="0 0 26 26" strokeWidth="1.600">
    <path d="M7 7H4a2 2 0 0 0-2 2v13a2 2 0 0 0 2 2h17a2 2 0 0 0 2-2V9a2 2 0 0 0-2-2h-8M25 12v6" />
    <path d="M10 0 6 9h5l-3 9 8-11h-5l2-7z" fill="#fff" stroke="none" />
  </Ic>
);

/* uml image */
const WATERMARK_ROWS = Array.from({ length: 25 }, (_, i) => 399 + i * 19.55);
const ELLIPSES = [
  ['Book Ticket', 819, 433, 48],
  ['Generate Cancellation Report', 1078, 465.5, 110],
  ['Cancel Ticket', 785.5, 531, 53.5],
  ['Modify Ticket Details', 864.5, 583, 79.5],
  ['Update Changes', 1093, 596, 81],
  ['Make Payment', 789, 635, 57],
  ['Validate Customer Details', 1083.5, 655, 97.5],
  ['Issue Ticket', 1087, 720, 48],
];
const ASSOC = [
  [653.4, 531, 794, 448], [653.4, 545, 731, 537], [653.4, 552, 783, 572], [653.4, 564, 760.5, 621],
  [1093.5, 481, 1232.6, 604], [1172.5, 611, 1233, 622], [1176, 640, 1233, 631], [1114, 705, 1233, 641],
];
const DEPS = [
  [790.5, 516, 814, 448, '5 3'], [859, 568, 822, 448, '5 3'], [839.5, 517, 1011, 481, '3 2'],
  [944, 588, 1012, 591, '3 2'], [839.5, 649, 1038, 707, '3 2'],
];
const STEREO = [
  ['«extend»', 779, 481], ['«extend»', 855, 481], ['«include»', 930, 507], ['«include»', 976, 579], ['«include»', 917, 684],
];
const arrowHead = (x1, y1, x2, y2) => {
  const a = Math.atan2(y1 - y2, x1 - x2);
  const p = d => `${x2 + 12 * Math.cos(a + d)},${y2 + 12 * Math.sin(a + d)}`;
  return `${p(0.45)} ${x2},${y2} ${p(-0.45)}`;
};
const Actor = ({ x, y, name }) => (
  <g stroke="#222" strokeWidth="1" fill="none">
    <ellipse cx={x} cy={y} rx="7.500" ry="7.500" fill="#fff" />
    <path d={`M${x} ${y + 7.5}V${y + 23}M${x - 8} ${y + 11}H${x + 8}M${x} ${y + 23}L${x - 10} ${y + 35}M${x} ${y + 23}L${x + 10} ${y + 35}`} />
    <text x={x} y={y + 50} textAnchor="middle" stroke="none" fill="#111" fontSize="10.600" fontWeight="700">{name}</text>
  </g>
);
const Diagram = () => (
  <Figure width="731" height="491" viewBox="587 389 731 491" fontFamily="Liberation Sans, sans-serif">
    {WATERMARK_ROWS.map(y => (
      <text key={y} x="587" y={y + 6} fontSize="15.900" fill="#e9e9e9">
        UNREGISTERED UNREGISTERED UNREGISTERED UNREGISTERED UNREGISTERED UNREGISTERED
      </text>
    ))}
    <rect x="711" y="398" width="489" height="456" fill="#ececec" opacity="0.600" />
    <rect x="706.500" y="393.500" width="488" height="455" fill="#fff" stroke="#777" strokeWidth="1.600" />
    <text x="950.500" y="406.500" textAnchor="middle" fontSize="10.600" fontWeight="700" fill="#111">Ticket Purchasing</text>
    {ASSOC.map(([a, b, c, d], i) => <line key={i} x1={a} y1={b} x2={c} y2={d} stroke="#222" strokeWidth="1" />)}
    {DEPS.map(([a, b, c, d, dash], i) => (
      <g key={i} stroke="#333" fill="none" strokeWidth="1">
        <line x1={a} y1={b} x2={c} y2={d} strokeDasharray={dash} />
        <polyline points={arrowHead(a, b, c, d)} />
      </g>
    ))}
    {ELLIPSES.map(([name, cx, cy, rx]) => (
      <g key={name}>
        <ellipse cx={cx + 4} cy={cy + 5} rx={rx} ry="14" fill="#e9e9e9" />
        <ellipse cx={cx} cy={cy} rx={rx} ry="14" fill="#fff" stroke="#222" strokeWidth="1" />
        <text x={cx} y={cy + 3.700} textAnchor="middle" fontSize="10.600" fontWeight="700" fill="#111">{name}</text>
      </g>
    ))}
    {STEREO.map(([label, x, y]) => (
      <text key={x} x={x} y={y + 3.500} textAnchor="middle" fontSize="10" fill="#444">{label}</text>
    ))}
    <Actor x={623} y={525} name="Customer" />
    <Actor x={1260} y={603} name="Operator" />
  </Figure>
);

const TABS = [
  ['File', 68], ['Home', 85, true], ['Insert', 78], ['Draw', 74], ['Design', 90], ['Layout', 90],
  ['References', 124], ['Mailings', 103], ['Review', 90], ['View', 71], ['Help', 60],
];

export default function App() {
  return (
    <Shell>
      <Global />
      <TitleBar>
        <TitleLeft>
          <WordMark />
          <AutoSave>AutoSave</AutoSave>
          <Toggle><Knob />Off</Toggle>
          <QuickIcon $w={43}><SaveIcon /></QuickIcon>
          <QuickIcon $w={59} $dim><UndoIcon /><Chev w={8} /></QuickIcon>
          <QuickIcon $w={49} $dim><RedoIcon /></QuickIcon>
          <QuickIcon $w={47}><CustomizeIcon /></QuickIcon>
          <DocName>OOSE lab file DONE DEAL.docx  -  Compatibility Mode • Saved</DocName>
          <Chev w={14} />
        </TitleLeft>
        <SearchBox><SearchIcon />Search</SearchBox>
        <Account>
          Vishal Nain
          <Avatar>VN</Avatar>
        </Account>
        <WinBtn $w={72}><Brush /></WinBtn>
        <WinBtn $w={70}><Ic width="16" height="2" viewBox="0 0 16 2"><path d="M0 1h16" /></Ic></WinBtn>
        <WinBtn $w={72}>
          <Ic width="15" height="17" viewBox="0 0 15 17" strokeWidth="1.400">
            <rect x="1" y="3" width="11" height="13" rx="2" /><path d="M4 1h6a4 4 0 0 1 4 4v7" />
          </Ic>
        </WinBtn>
        <WinBtn $w={72}><Ic width="16" height="16" viewBox="0 0 16 16"><path d="M1 1l14 14M15 1 1 15" /></Ic></WinBtn>
      </TitleBar>

      <TabRow>
        {TABS.map(([t, w, a]) => <Tab key={t} $w={w} $active={a}>{t}</Tab>)}
        <TabActions>
          <ActionBtn $w={143}>
            <Ic width="20" height="20" viewBox="0 0 20 20"><path d="M1 2h17v12H7l-4 4v-4H1z" /></Ic>
            Comments
          </ActionBtn>
          <ActionBtn $w={128}>
            <Ic width="24" height="26" viewBox="0 0 24 26" strokeWidth="1.500"><path d="M17 2l5 4L7 23l-6 2 1-6zM14 6l5 4" /></Ic>
            Editing
            <Chev w={8} />
          </ActionBtn>
          <ActionBtn $w={119} $primary>
            <Ic width="20" height="22" viewBox="0 0 20 22"><path d="M8 5H1v16h15v-6M7 15c1-5 5-7 9-7V4l4 6-4 5v-4c-3 0-7 1-9 4z" /></Ic>
            Share
            <Chev w={9} />
          </ActionBtn>
        </TabActions>
      </TabRow>

      <Ribbon>
        <Group $w={129}>
          <GroupBody>
            <Clipboard>
              <PasteCol>
                <PasteIconWrap><ClipboardIcon /></PasteIconWrap>
                <PasteLabel>Paste</PasteLabel>
                <PasteChev><Chev w={9} /></PasteChev>
              </PasteCol>
              <ClipTools><ScissorsIcon /><CopyIcon /><PainterIcon /></ClipTools>
            </Clipboard>
          </GroupBody>
          <GroupFooter><span /><GroupLabel>Clipboard</GroupLabel><Launcher /></GroupFooter>
        </Group>

        <Group $w={466} $pad={13}>
          <GroupBody>
            <Row $top={6}>
              <Select $w={187}>Times New Roman<Chev w={9} /></Select>
              <Select $w={63}>10<Chev w={9} /></Select>
              <Tool $w={42}><GrowA up /></Tool>
              <Tool $w={38} $sep><GrowA /></Tool>
              <Tool $w={63} $sep><BigA $s={20}>Aa</BigA><Chev w={9} /></Tool>
              <Tool $w={44}><ClearA /></Tool>
            </Row>
            <Row $top={1}>
              <Tool $w={36}><BigA $s={19} $w={700}>B</BigA></Tool>
              <Tool $w={40}><BigA $s={19} $italic $f={'"Liberation Serif", serif'}>I</BigA></Tool>
              <Tool $w={60} $gap={16}><BigA $s={18} $under>U</BigA><Chev w={9} /></Tool>
              <Tool $w={40}><BigA $s={18} $strike>ab</BigA></Tool>
              <Tool $w={41}><BigA $s={18} $w={600}>x<Scr>2</Scr></BigA></Tool>
              <Tool $w={39} $sep><BigA $s={18} $w={600}>x<Scr $up>2</Scr></BigA></Tool>
              <Tool $w={61}><EffectA /><Chev w={9} /></Tool>
              <Tool $w={65} $gap={12}><HighlightIcon /><Chev w={9} /></Tool>
              <Tool $w={60} $gap={12}><ColorA /><Chev w={9} /></Tool>
            </Row>
          </GroupBody>
          <GroupFooter $pad={13}><span /><GroupLabel>Font</GroupLabel><Launcher /></GroupFooter>
        </Group>

        <Group $w={374} $pad={13}>
          <GroupBody>
            <Row $top={6}>
              <Tool $w={58} $gap={12}><BulletIcon /><Chev w={9} /></Tool>
              <Tool $w={58} $gap={10}><NumberIcon /><Chev w={9} /></Tool>
              <Tool $w={64} $sep $gap={10}><MultiIcon /><Chev w={9} /></Tool>
              <Tool $w={44}><IndentIcon out /></Tool>
              <Tool $w={39} $sep><IndentIcon /></Tool>
              <Tool $w={42} $sep><SortIcon /></Tool>
              <Tool $w={44}><Pilcrow /></Tool>
            </Row>
            <Row $top={1}>
              <Tool $w={35} $on><AlignIcon mode="left" /></Tool>
              <Tool $w={42}><AlignIcon mode="center" /></Tool>
              <Tool $w={38}><AlignIcon mode="right" /></Tool>
              <Tool $w={41}><AlignIcon mode="justify" /></Tool>
              <Tool $w={65} $sep><SpacingIcon /><Chev w={9} /></Tool>
              <Tool $w={62} $gap={12}><ShadeIcon /><Chev w={9} /></Tool>
              <Tool $w={60} $gap={12}><BorderIcon /><Chev w={9} /></Tool>
            </Row>
          </GroupBody>
          <GroupFooter $pad={13}><span /><GroupLabel>Paragraph</GroupLabel><Launcher /></GroupFooter>
        </Group>

        <Group $w={704}>
          <GroupBody>
            <Gallery>
              <StyleCell><Swatch $size={20.5}>Normal</Swatch></StyleCell>
              <StyleCell $sel><Swatch $size={26} $font={'"Liberation Serif", serif'}>Body Text</Swatch></StyleCell>
              <StyleCell><Swatch $size={20}>No Spacing</Swatch></StyleCell>
              <StyleCell><Swatch $size={29.5} $weight={300} $color="#2e74b5" $lift={3}>Heading 1</Swatch></StyleCell>
              <GalleryScroll>
                <ScrollCell $dim><Chev w={9} up /></ScrollCell>
                <ScrollCell><Chev w={9} /></ScrollCell>
                <ScrollCell>
                  <Ic width="10" height="2" viewBox="0 0 10 2" strokeWidth="2"><path d="M0 1h10" /></Ic>
                  <Chev w={9} />
                </ScrollCell>
              </GalleryScroll>
            </Gallery>
          </GroupBody>
          <GroupFooter><span /><GroupLabel>Styles</GroupLabel><Launcher /></GroupFooter>
        </Group>

        <Group $w={135} $pad={18}>
          <GroupBody>
            <EditList>
              <EditRow><EditIcon><SearchIcon s={25} /></EditIcon>Find<EditChev $m={14}><Chev w={9} /></EditChev></EditRow>
              <EditRow><EditIcon><ReplaceIcon /></EditIcon>Replace</EditRow>
              <EditRow><EditIcon><CursorIcon /></EditIcon>Select<Chev w={9} /></EditRow>
            </EditList>
          </GroupBody>
          <GroupFooter $pad={18}><span /><GroupLabel $shift={0}>Editing</GroupLabel><span /></GroupFooter>
        </Group>

        <Group $w={87} $last>
          <Collapse><Chev w={15} /></Collapse>
        </Group>
      </Ribbon>

      <DocArea>
        <Page>
          <Para>{`Think of at least two alternative courses of events for this use-case. Describe the alternative courses
as separate use-cases. Modify the description of the original use-case to make evident where exactly
these alternative use-cases may be called and under which conditions. Create a use-case diagram to
illustrate the relationships between the alternative use-cases and the use-case given.`}</Para>
          <Diagram />
          <Line><Bold>AQ2</Bold> Create a use case diagram for any project carried out by you?</Line>
          <Line $color="#ff0000">FALCON (a chess engine)</Line>
          <Footer>
            <FooterRule />
            <FooterText><span>Shubhangi Gupta</span><FooterNum>35135304420</FooterNum></FooterText>
          </Footer>
        </Page>
        <Scrollbar>
          <Arrow />
          <Thumb />
          <Arrow $down />
        </Scrollbar>
      </DocArea>

      <StatusBar>
        <StatusItem $w={113}>Page 6 of 48</StatusItem>
        <StatusItem $w={109}>3791 words</StatusItem>
        <StatusItem $w={47}><ProofIcon /></StatusItem>
        <StatusItem $w={182}>English (United States)</StatusItem>
        <StatusItem $gap={5}><AccessIcon />Accessibility: Unavailable</StatusItem>
        <StatusRight>
          <StatusItem $w={101} $gap={3}><FocusIcon />Focus</StatusItem>
          <StatusItem $w={40}><ReadIcon /></StatusItem>
          <StatusItem $w={64} $on $center><PrintIcon /></StatusItem>
          <StatusItem $w={56} $center $mr={10}><WebIcon /></StatusItem>
          <Ic width="11" height="2" viewBox="0 0 11 2"><path d="M0 1h11" /></Ic>
          <Zoom><ZoomThumb /><ZoomTick /></Zoom>
          <Ic width="12" height="12" viewBox="0 0 12 12"><path d="M0 6h12M6 0v12" /></Ic>
          <StatusItem $w={50} $end>80%</StatusItem>
        </StatusRight>
      </StatusBar>

      <TaskBar>
        <Widget>
          <Coins />
          <WidgetText>GBPINR<Loss>-0.61%</Loss></WidgetText>
        </Widget>
        <WinLogo />
        <TaskSearch>
          <Ic width="23" height="24" viewBox="0 0 23 24" strokeWidth="2"><circle cx="10" cy="10" r="8.500" /><path d="M16 16l6 7" /></Ic>
          Search
          <BingWrap><BingIcon /></BingWrap>
        </TaskSearch>
        <Slot><TaskView /></Slot>
        <Slot><TeamsIcon /></Slot>
        <Slot><EdgeIcon /><Dot /></Slot>
        <Slot><FolderIcon /><Dot /></Slot>
        <Slot><StoreIcon /></Slot>
        <Slot><ChromeIcon /><Dot /></Slot>
        <Slot><BraveIcon /></Slot>
        <Slot $active><WordMark s={36} /><Dot $active /></Slot>
        <Tray>
          <TrayItem $w={24}><Chev w={14} up /></TrayItem>
          <TrayItem $w={72}><CloudIcon /></TrayItem>
          <Lang>ENG<br />IN</Lang>
          <TrayItem $w={38}><WifiIcon /></TrayItem>
          <TrayItem $w={32}><SpeakerIcon /></TrayItem>
          <TrayItem $w={42}><BatteryIcon /></TrayItem>
          <Clock>10:59 PM<ClockDate>12-06-2023</ClockDate></Clock>
        </Tray>
      </TaskBar>
    </Shell>
  );
}
